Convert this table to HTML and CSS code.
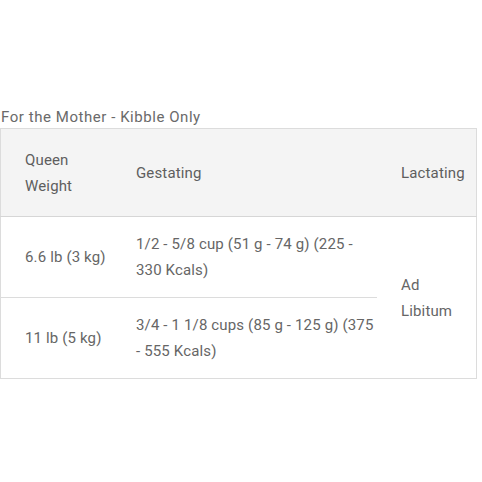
FILE: index.html
```html
<!DOCTYPE html>
<html>
<head>
<meta charset="utf-8">
<link rel="stylesheet" href="styles.css">
</head>
<body>
<div class="wrap">
<table class="feed">
<caption>For the Mother - Kibble Only</caption>
<thead>
<tr>
<th class="c1">Queen<br>Weight</th>
<th class="c2">Gestating</th>
<th class="c3">Lactating</th>
</tr>
</thead>
<tbody>
<tr>
<td class="c1">6.6 lb (3 kg)</td>
<td class="c2">1/2 - 5/8 cup (51 g - 74 g) (225 - 330 Kcals)</td>
<td class="c3 span" rowspan="2">Ad<br>Libitum</td>
</tr>
<tr class="last">
<td class="c1">11 lb (5 kg)</td>
<td class="c2">3/4 - 1 1/8 cups (85 g - 125 g) (375 - 555 Kcals)</td>
</tr>
</tbody>
</table>
</div>
</body>
</html>
```
FILE: styles.css
```css
html, body {
  margin: 0;
  padding: 0;
  background: #fff;
}
.wrap {
  padding-top: 106px;
}
.feed {
  border-collapse: collapse;
  width: 476px;
  table-layout: fixed;
  font-family: Roboto, "Liberation Sans", sans-serif;
  font-size: 15px;
  line-height: 26px;
  letter-spacing: 0.15px;
  color: #666;
  border: 1px solid #dcdcdc;
}
.feed caption {
  text-align: left;
  padding-left: 1px;
  line-height: 22px;
  letter-spacing: 0.55px;
  color: #6a6a6a;
  caption-side: top;
}
.feed th {
  background: #f4f4f4;
  font-weight: normal;
  text-align: left;
  color: #5e5e5e;
  padding: 18px 0 17px 24px;
  border-bottom: 1px solid #d6d6d6;
  vertical-align: middle;
}
.feed td {
  padding: 14px 0 14px 24px;
  vertical-align: middle;
  border-bottom: 1px solid #dcdcdc;
}
.feed .c1 { width: 87px; }
.feed .c2 { width: 241px; }
.feed .c3 { width: 75px; }
.feed .last td { padding-bottom: 14px; }
```
